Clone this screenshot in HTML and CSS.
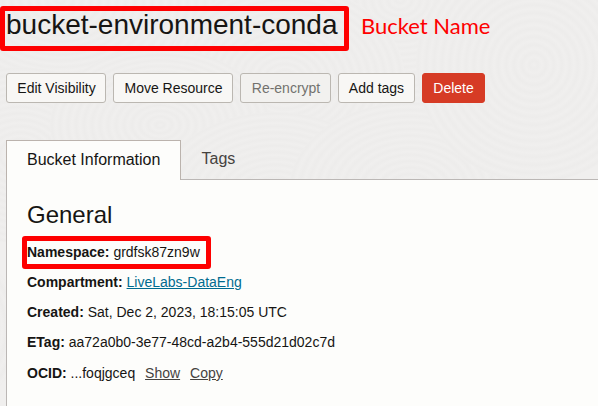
FILE: index.html
```html
<!DOCTYPE html>
<html lang="en">
<head>
<meta charset="utf-8">
<title>bucket-environment-conda</title>
<link rel="stylesheet" href="styles.css">
</head>
<body>
<div class="page">
  <header class="heading">
    <h1 class="title"><span class="title-text">bucket-environment-conda</span></h1>
    <span class="note">Bucket Name</span>
  </header>
  <div class="actions">
    <button class="btn btn-visibility">Edit Visibility</button>
    <button class="btn btn-move">Move Resource</button>
    <button class="btn btn-encrypt" disabled>Re-encrypt</button>
    <button class="btn btn-tags">Add tags</button>
    <button class="btn btn-delete">Delete</button>
  </div>
  <nav class="tabs">
    <a class="tab tab-active">Bucket Information</a>
    <a class="tab tab-tags">Tags</a>
  </nav>
  <main class="panel">
    <h2 class="section-title">General</h2>
    <div class="row row-marked"><b>Namespace:</b> grdfsk87zn9w</div>
    <div class="row"><b>Compartment:</b> <a class="link">LiveLabs-DataEng</a></div>
    <div class="row"><b>Created:</b> Sat, Dec 2, 2023, 18:15:05 UTC</div>
    <div class="row"><b>ETag:</b> aa72a0b0-3e77-48cd-a2b4-555d21d02c7d</div>
    <div class="row row-last"><b>OCID:</b> ...foqjgceq <a class="action">Show</a><a class="action">Copy</a></div>
  </main>
  <svg class="rings" width="598" height="406" viewBox="0 0 598 406" aria-hidden="true">
    <defs>
      <radialGradient id="ring" gradientUnits="userSpaceOnUse" cx="0" cy="0" r="8" spreadMethod="repeat">
        <stop offset="0" stop-color="#f0efee"/>
        <stop offset=".5" stop-color="#edeceb"/>
        <stop offset="1" stop-color="#f0efee"/>
      </radialGradient>
    </defs>
    <g fill="url(#ring)">
      <circle r="150" transform="translate(60 0) scale(1.1 .8)"/>
      <circle r="150" transform="translate(400 0) scale(1 .8)"/>
      <circle r="120" transform="translate(285 80) scale(1 .8)"/>
      <circle r="110" transform="translate(20 155) scale(1 .8)"/>
      <circle r="110" transform="translate(160 125) scale(1 .7)"/>
      <circle r="110" transform="translate(275 200) scale(1.1 .8)"/>
      <circle r="110" transform="translate(410 190) scale(1.1 .8)"/>
      <circle r="118" transform="translate(534 65)"/>
      <circle r="90" transform="translate(-70 330)"/>
    </g>
  </svg>
</div>
</body>
</html>
```
FILE: styles.css
```css
* { box-sizing: border-box; }
body { margin: 0; }
.page {
  position: relative;
  z-index: 0;
  display: flex;
  flex-direction: column;
  width: 598px;
  height: 406px;
  overflow: hidden;
  background: #f0efee;
  font-family: "Liberation Sans", Arial, sans-serif;
  font-size: 14px;
  color: #161513;
}
.rings { position: absolute; inset: 0; z-index: -1; }
.heading { display: flex; height: 73px; padding-top: 6px; }
.title {
  width: 349px;
  height: 45px;
  margin: 0;
  padding-left: 1px;
  border: 5px solid #fe0000;
  border-radius: 3px;
  font-size: 28px;
  font-weight: 400;
  line-height: 28px;
  white-space: nowrap;
}
.note {
  margin: 5px 0 0 12px;
  font-family: Lato, sans-serif;
  font-size: 22px;
  font-weight: 400;
  line-height: 30px;
  color: #fe0000;
  white-space: nowrap;
}
.actions { display: flex; gap: 7px; height: 67px; padding-left: 6px; }
.btn {
  height: 30px;
  padding: 0;
  border: 1px solid #bbb7b1;
  border-radius: 3px;
  background: #f8f7f5;
  font-family: inherit;
  font-size: 14px;
  line-height: 28px;
  color: #161513;
  white-space: nowrap;
}
.btn-visibility { width: 100px; padding-left: 1px; }
.btn-move { width: 120px; padding-left: 1px; }
.btn-encrypt { width: 91px; padding-left: 1px; background: #f2f1ef; color: #73716e; }
.btn-tags { width: 77px; }
.btn-delete { width: 63px; border-color: #d63b25; background: #d63b25; color: #fff; }
.tabs { position: relative; z-index: 1; display: flex; height: 40px; padding-left: 6px; }
.tab {
  height: 39px;
  padding: 0 20px;
  font-size: 16px;
  line-height: 38px;
  color: #45423f;
  white-space: nowrap;
}
.tab-tags { padding-left: 20.5px; }
.tab-active {
  width: 175px;
  height: 40px;
  border: 1px solid #bbb3ad;
  border-bottom: 0;
  background: #fdfdfb;
  color: #161513;
}
.panel {
  flex: 1;
  margin: -1px 0 0 6px;
  padding: 20px 0 0 20px;
  border: 1px solid #bbb7b5;
  border-right: 0;
  border-bottom: 0;
  background: #fdfdfb;
}
.section-title { margin: 0; font-size: 24px; font-weight: 400; line-height: 30px; height: 36px; }
.row { height: 30px; line-height: 30px; white-space: nowrap; }
.row-marked {
  width: 189px;
  height: 33px;
  margin: 0 0 -2px -5px;
  border: 5px solid #fe0000;
  border-radius: 3px;
  line-height: 22px;
}
.row-last { height: 32px; line-height: 32px; }
.link { color: #006b8f; text-decoration: underline; }
.action { margin-left: 6px; color: #45423f; text-decoration: underline; }
.action + .action { margin-left: 10px; }
```
